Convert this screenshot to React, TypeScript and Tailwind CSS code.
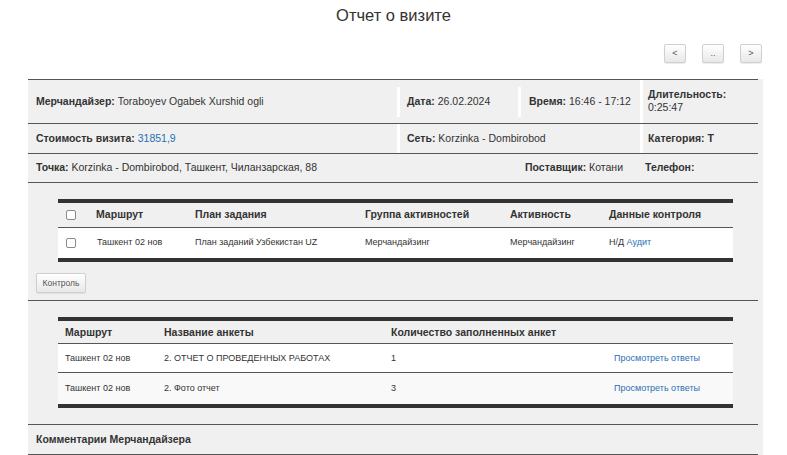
import React from "react";

const font = { fontFamily: '"Liberation Sans", Arial, sans-serif' };

function NavButton({ label }: { label: string }) {
  return (
    <button className="w-[22px] h-[19px] rounded-[2px] border border-[#cfcfcf] bg-gradient-to-b from-white to-[#e8e8e8] text-[9px] leading-none text-[#555] shadow-[0_1px_1px_rgba(0,0,0,0.08)]">
      {label}
    </button>
  );
}

function Checkbox() {
  return <span className="block w-[10px] h-[10px] rounded-[2px] border border-[#8a8a8a] bg-white" />;
}

const routes = [
  { route: "Ташкент 02 нов", name: "2. ОТЧЕТ О ПРОВЕДЕННЫХ РАБОТАХ", count: "1" },
  { route: "Ташкент 02 нов", name: "2. Фото отчет", count: "3" },
];

export default function App() {
  return (
    <div className="w-[787px] h-[455px] overflow-hidden bg-white text-[#333]" style={font}>
      {/* title */}
      <h1 className="h-[34px] pt-[4px] text-center text-[16.5px] leading-[22px] text-[#333]">Отчет о визите</h1>

      {/* pager */}
      <div className="flex justify-end gap-[16px] pr-[25px] pt-[10px] h-[45px]">
        <NavButton label="<" />
        <NavButton label=".." />
        <NavButton label=">" />
      </div>

      {/* main panel */}
      <div className="ml-[28px] w-[735px] bg-[#f0f0f0] pr-[5px]">
        {/* row 1 */}
        <div className="flex h-[44px] border-t border-[#555] text-[10.5px]">
          <div className="w-[369px] flex items-center pl-[8px]">
            <b>Мерчандайзер:</b>&nbsp;Toraboyev Ogabek Xurshid ogli
          </div>
          <div className="w-[121px] mt-[7px] mb-[6px] flex items-center border-l-[3px] border-white pl-[7px]">
            <b>Дата:</b>&nbsp;26.02.2024
          </div>
          <div className="w-[122px] mt-[7px] mb-[6px] flex items-center border-l-[3px] border-white pl-[8px]">
            <b>Время:</b>&nbsp;16:46 - 17:12
          </div>
          <div className="flex-1 flex flex-col justify-center border-l-[3px] border-white pl-[5px] leading-[13px] pb-[2px]">
            <b>Длительность:</b>
            <span>0:25:47</span>
          </div>
        </div>

        {/* row 2 */}
        <div className="flex h-[30px] border-t border-[#555] text-[10.5px]">
          <div className="w-[369px] flex items-center pl-[8px]">
            <b>Стоимость визита:</b>&nbsp;<span className="text-[#2a6fb5]">31851,9</span>
          </div>
          <div className="w-[243px] flex items-center border-l-[3px] border-white pl-[7px]">
            <b>Сеть:</b>&nbsp;Korzinka - Dombirobod
          </div>
          <div className="flex-1 flex items-center border-l-[3px] border-white pl-[5px]">
            <b>Категория:</b>&nbsp;<b>T</b>
          </div>
        </div>

        {/* row 3 */}
        <div className="flex h-[30px] border-y border-[#555] text-[10.5px]">
          <div className="w-[497px] flex items-center pl-[8px]">
            <b>Точка:</b>&nbsp;Korzinka - Dombirobod, Ташкент, Чиланзарская, 88
          </div>
          <div className="w-[120px] flex items-center">
            <b>Поставщик:</b>&nbsp;Котани
          </div>
          <div className="flex-1 flex items-center">
            <b>Телефон:</b>
          </div>
        </div>

        {/* activities table */}
        <div className="pt-[16px] pl-[30px]">
          <div className="w-[675px] border-t-4 border-b-4 border-[#333]">
            <div className="grid grid-cols-[38px_99px_170px_145px_99px_1fr] items-center h-[25px] border-b border-[#555] text-[10.5px] font-bold text-[#333]">
              <div className="pl-[8px]"><Checkbox /></div>
              <div>Маршрут</div>
              <div>План задания</div>
              <div>Группа активностей</div>
              <div>Активность</div>
              <div>Данные контроля</div>
            </div>
            <div className="grid grid-cols-[38px_99px_170px_145px_99px_1fr] items-center h-[30px] bg-white text-[9px] text-[#333]">
              <div className="pl-[8px]"><Checkbox /></div>
              <div className="pl-[1px]">Ташкент 02 нов</div>
              <div>План заданий Узбекистан UZ</div>
              <div>Мерчандайзинг</div>
              <div>Мерчандайзинг</div>
              <div>
                Н/Д <span className="text-[#2a6fb5]">Аудит</span>
              </div>
            </div>
          </div>
        </div>

        <div className="w-[730px] pt-[7px] pb-[7px] pl-[8px] border-b border-[#555]">
          <button className="w-[50px] h-[20px] rounded-[2px] border border-[#cfcfcf] bg-gradient-to-b from-white to-[#e8e8e8] text-[8.5px] text-[#555] shadow-[0_1px_1px_rgba(0,0,0,0.08)]">
            Контроль
          </button>
        </div>

        {/* questionnaires table */}
        <div className="pt-[16px] pb-[16px] pl-[30px]">
          <div className="w-[675px] border-t-4 border-b-4 border-[#333]">
            <div className="grid grid-cols-[106px_227px_223px_1fr] items-center h-[23px] border-b border-[#555] text-[10.5px] font-bold text-[#333]">
              <div className="pl-[7px]">Маршрут</div>
              <div>Название анкеты</div>
              <div>Количество заполненных анкет</div>
              <div />
            </div>
            {routes.map((r, i) => (
              <div
                key={i}
                className={
                  "grid grid-cols-[106px_227px_223px_1fr] items-center text-[9px] text-[#333] " +
                  (i === 0 ? "h-[29px] bg-white border-b border-[#555]" : "h-[31px] bg-[#f9f9f9]")
                }
              >
                <div className="pl-[7px]">{r.route}</div>
                <div>{r.name}</div>
                <div>{r.count}</div>
                <div className="text-[#2a6fb5]">Просмотреть ответы</div>
              </div>
            ))}
          </div>
        </div>

        <div className="w-[730px] h-[31px] flex items-center pl-[8px] border-y border-[#555] text-[10.5px] font-bold">
          Комментарии Мерчандайзера
        </div>
      </div>
    </div>
  );
}
